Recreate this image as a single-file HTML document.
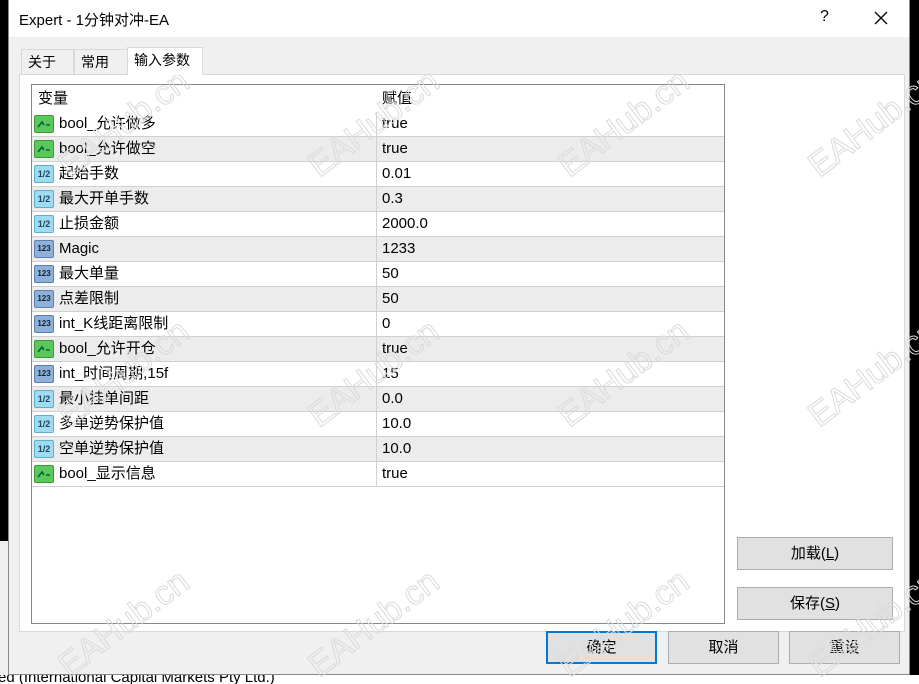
<!DOCTYPE html>
<html><head><meta charset="utf-8"><style>
*{margin:0;padding:0;box-sizing:border-box}
body{width:919px;height:684px;overflow:hidden;background:#000;position:relative;font-family:"Liberation Sans","Microsoft YaHei","Noto Sans CJK SC",sans-serif;color:#000}
.abs{position:absolute}
#left{left:0;top:541px;width:9px;height:143px;background:#f0f0f0}
#bottom{left:0;top:675px;width:919px;height:9px;background:#fff;overflow:hidden}
#bottom span{position:absolute;left:-2px;top:-6px;font-size:15px;white-space:nowrap}
#dlg{left:8px;top:0;width:902px;height:675px;background:#f0f0f0;border:1px solid #888;border-top:none}
#title{left:0;top:0;width:900px;height:37px;background:#fff}
#title .t{position:absolute;left:10px;top:9px;font-size:15px}
.tab{position:absolute;top:49px;height:26px;border:1px solid #d9d9d9;border-bottom:none;background:#f0f0f0;font-size:14px;line-height:24px;padding-left:6px}
#panel{left:10px;top:74px;width:886px;height:558px;background:#fff;border:1px solid #d9d9d9}
#list{left:22px;top:84px;width:694px;height:540px;border:1px solid #828790;background:#fff;overflow:hidden}
.row{position:absolute;left:0;width:692px;height:25px;font-size:15px;line-height:24px}
.row .n{position:absolute;left:27px;top:0}
.row .v{position:absolute;left:350px;top:0}
.row .d{position:absolute;left:344px;top:0;width:1px;height:25px;background:#d0d0d0}
.row.g{background:#ececec}
.row.b{border-bottom:1px solid #d0d0d0}
.ic{position:absolute;left:2px;top:3px;width:20px;height:18px;border-radius:2px}
.btn{position:absolute;height:33px;background:#e1e1e1;border:1px solid #adadad;font-size:15px;text-align:center;line-height:31px}
</style></head><body>
<div id="left" class="abs"></div>
<div id="bottom" class="abs"><span>ed (International Capital Markets Pty Ltd.)</span></div>
<div id="dlg" class="abs">
 <div id="title" class="abs"><span class="t">Expert - 1分钟对冲-EA</span>
  <span style="position:absolute;left:811px;top:8px;font-size:16px">?</span>
  <svg style="position:absolute;left:865px;top:11px" width="14" height="14"><path d="M1 1L13 13M13 1L1 13" stroke="#000" stroke-width="1.3"/></svg>
 </div>
 <div class="tab" style="left:12px;width:53px">关于</div>
 <div class="tab" style="left:65px;width:54px">常用</div>
 <div id="panel" class="abs"></div>
 <div class="tab" style="left:118px;top:47px;width:76px;height:28px;background:#fff;z-index:2">输入参数</div>
 <div id="list" class="abs">
  <div class="row" style="top:2px"><span class="n" style="left:6px">变量</span><span class="v">赋值</span></div>
 </div>
 <div class="btn" style="left:728px;top:537px;width:156px">加载(<u>L</u>)</div>
 <div class="btn" style="left:728px;top:587px;width:156px">保存(<u>S</u>)</div>
 <div class="btn" style="left:537px;top:631px;width:111px;border:2px solid #0078d7;line-height:29px">确定</div>
 <div class="btn" style="left:659px;top:631px;width:111px">取消</div>
 <div class="btn" style="left:780px;top:631px;width:111px">重设</div>
</div>
<svg class="abs" style="left:0;top:0;pointer-events:none" width="919" height="684" id="wm"></svg>
<script>
var rows=[["b","bool_允许做多","true"],["b","bool_允许做空","true"],["h","起始手数","0.01"],["h","最大开单手数","0.3"],["h","止损金额","2000.0"],["i","Magic","1233"],["i","最大单量","50"],["i","点差限制","50"],["i","int_K线距离限制","0"],["b","bool_允许开仓","true"],["i","int_时间周期,15f","15"],["h","最小挂单间距","0.0"],["h","多单逆势保护值","10.0"],["h","空单逆势保护值","10.0"],["b","bool_显示信息","true"]];
var L=document.getElementById('list'),h='';
rows.forEach(function(r,i){
 var ic;
 if(r[0]=='b')ic='<div class="ic" style="background:#5cc85c;border:1px solid #3a9a3a"><svg width="18" height="16"><path d="M3 11L7 6L9 9M11 9L15 9" stroke="#063" stroke-width="1.6" fill="none"/></svg></div>';
 else if(r[0]=='h')ic='<div class="ic" style="background:#9fdcef;border:1px solid #5ab0cc;font-size:9px;font-weight:bold;color:#246;line-height:16px;text-align:center">1/2</div>';
 else ic='<div class="ic" style="background:#8fb0d8;border:1px solid #5a7fb0;font-size:8px;font-weight:bold;color:#123;line-height:16px;text-align:center">123</div>';
 h+='<div class="row b'+(i%2?' g':'')+'" style="top:'+(27+i*25)+'px">'+ic+'<span class="n">'+r[1]+'</span><div class="d"></div><span class="v">'+r[2]+'</span></div>';
});
L.innerHTML+=h;
var s='';
for(var j=0;j<3;j++)for(var k=0;k<4;k++){var x=125+250*k,y=125+250*j;
s+='<text x="'+x+'" y="'+y+'" transform="rotate(-37 '+x+' '+y+')" text-anchor="middle" dominant-baseline="middle" font-family="Liberation Sans,sans-serif" font-size="34" fill="none" stroke="#dadada" stroke-width="1">EAHub.cn</text>';}
document.getElementById('wm').innerHTML=s;
</script>
</body></html>
